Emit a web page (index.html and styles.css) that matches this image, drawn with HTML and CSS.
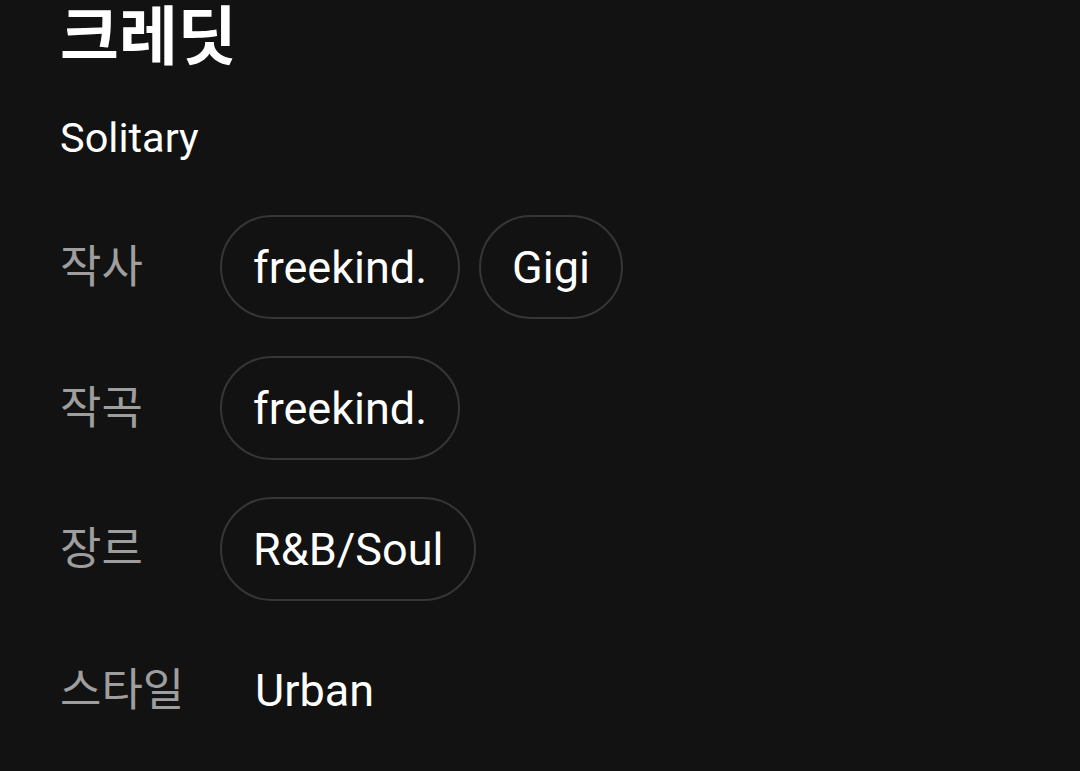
FILE: index.html
```html
<!DOCTYPE html>
<html lang="ko">
<head>
  <meta charset="UTF-8">
  <meta name="viewport" content="width=device-width, initial-scale=1.0">
  <title>크레딧</title>
  <link rel="stylesheet" href="styles.css">
</head>
<body>
  <div class="credits">
    <h1 class="title">크레딧</h1>
    <div class="track">Solitary</div>
    <div class="list">
      <div class="row">
        <div class="label">작사</div>
        <div class="chips">
          <span class="chip">freekind.</span>
          <span class="chip">Gigi</span>
        </div>
      </div>
      <div class="row">
        <div class="label">작곡</div>
        <div class="chips">
          <span class="chip">freekind.</span>
        </div>
      </div>
      <div class="row">
        <div class="label">장르</div>
        <div class="chips">
          <span class="chip">R&amp;B/Soul</span>
        </div>
      </div>
      <div class="row">
        <div class="label">스타일</div>
        <div class="chips">
          <span class="plain">Urban</span>
        </div>
      </div>
    </div>
  </div>
</body>
</html>
```

FILE: styles.css
```css
*{box-sizing:border-box}
html,body{margin:0;padding:0;background:#121212;overflow:hidden}
body{font-family:Roboto,"Noto Sans CJK KR",sans-serif;color:#fff;width:1080px;height:771px}
.credits{padding:0 0 0 60px}
.title{margin:0;font-size:64px;font-weight:700;line-height:76px}
.track{margin-top:34px;font-size:41.5px;line-height:56px}
.list{margin-top:49px;display:flex;flex-direction:column;gap:37px}
.row{display:grid;grid-template-columns:160px 1fr;align-items:center;min-height:104px}
.label{font-size:45px;color:#9e9e9e;line-height:1}
.chips{display:flex;gap:19px;align-items:center}
.chip{display:inline-flex;align-items:center;height:104px;padding:0 31px;border:2px solid #363636;border-radius:52px;font-size:45px}
.plain{font-size:45px;padding-left:35px}
```
